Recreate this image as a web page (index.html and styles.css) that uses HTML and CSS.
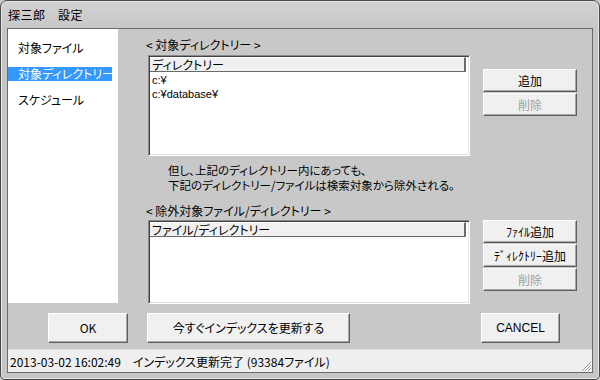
FILE: index.html
```html
<!DOCTYPE html>
<html lang="ja">
<head>
  <meta charset="UTF-8">
  <title>探三郎 設定</title>
  <link rel="stylesheet" href="styles.css">
</head>
<body>
  <div class="window">
    <div class="titlebar">探三郎　設定</div>
    <div class="client">
      <div class="content">
        <ul class="nav">
          <li>対象ファイル</li>
          <li class="active">対象ディレクトリー</li>
          <li>スケジュール</li>
        </ul>

        <div class="panel">
          <div class="caption">&lt; 対象ディレクトリー &gt;</div>
          <div></div>
          <div class="listbox list-dirs">
            <div class="list-head"><span>ディレクトリー</span></div>
            <div class="list-item">c:¥</div>
            <div class="list-item">c:¥database¥</div>
          </div>
          <div class="side-buttons first">
            <button>追加</button>
            <button disabled>削除</button>
          </div>

          <div class="note">
            <div>但し、上記のディレクトリー内にあっても、</div>
            <div>下記のディレクトリー/ファイルは検索対象から除外される。</div>
          </div>

          <div class="caption second">&lt; 除外対象ファイル/ディレクトリー &gt;</div>
          <div></div>
          <div class="listbox list-excl">
            <div class="list-head"><span>ファイル/ディレクトリー</span></div>
          </div>
          <div class="side-buttons">
            <button>ﾌｧｲﾙ追加</button>
            <button>ﾃﾞｨﾚｸﾄﾘｰ追加</button>
            <button disabled>削除</button>
          </div>
        </div>
      </div>

      <div class="actions">
        <button class="btn-ok">OK</button>
        <button class="btn-update">今すぐインデックスを更新する</button>
        <button class="btn-cancel">CANCEL</button>
      </div>

      <div class="statusbar">
        <span>2013-03-02 16:02:49　インデックス更新完了 (93384ファイル)</span>
        <svg class="grip" width="12" height="12" viewBox="0 0 12 12">
          <path d="M11 2 L2 11 M11 5 L5 11 M11 8 L8 11" stroke="#9a9a9a" stroke-width="1"/>
          <path d="M12 3 L3 12 M12 6 L6 12 M12 9 L9 12" stroke="#ffffff" stroke-width="1"/>
        </svg>
      </div>
    </div>
  </div>
</body>
</html>
```

FILE: styles.css
```css
body {
  margin: 0;
  background: #c8c8c8;
  font-family: "Noto Sans CJK JP", "Liberation Sans", sans-serif;
  font-size: 12px;
  font-feature-settings: "palt";
  color: #000;
}
.window {
  width: 600px;
  height: 380px;
  box-sizing: border-box;
  border: 1px solid #4a4a4a;
  border-radius: 7px 7px 5px 5px;
  background: linear-gradient(#d2d2d2, #c6c6c6 30px, #c6c6c6);
  box-shadow: inset 0 0 0 1px #e6e6e6;
  padding: 0 6px 6px 6px;
  display: flex;
  flex-direction: column;
}
.titlebar {
  height: 27px;
  line-height: 27px;
  padding-left: 1px;
  font-size: 12px;
  letter-spacing: 0.5px;
}
.client {
  flex: 1;
  background: #c8c8c8;
  border: 1px solid #6a6a6a;
  display: flex;
  flex-direction: column;
}
.content {
  display: flex;
  align-items: flex-start;
}
.nav {
  list-style: none;
  margin: 0;
  padding: 12px 0 0 0;
  width: 110px;
  height: 274px;
  box-sizing: border-box;
  background: #fff;
}
.nav li {
  line-height: 14px;
  height: 14px;
  margin: 0 6px 12px 0;
  padding-left: 10px;
  white-space: nowrap;
}
.nav li.active {
  background: #3399ff;
  color: #fff;
}
.panel {
  display: grid;
  grid-template-columns: 324px 94px;
  column-gap: 13px;
  padding: 9px 0 0 28px;
}
.caption {
  height: 17px;
  line-height: 14px;
  white-space: nowrap;
}
.caption.second {
  margin-top: 11px;
  height: 16px;
}
.listbox {
  margin-left: 2px;
  box-sizing: border-box;
  background: #fff;
  border: 1px solid;
  border-color: #8a8a8a #ffffff #ffffff #8a8a8a;
  box-shadow: inset 1px 1px 0 #404040, inset -1px -1px 0 #e2e2e2;
  padding: 1px;
}
.list-dirs {
  height: 101px;
}
.list-excl {
  height: 84px;
}
.list-head {
  height: 15px;
  padding-right: 2px;
}
.list-head span {
  display: block;
  height: 15px;
  box-sizing: border-box;
  line-height: 13px;
  padding-left: 2px;
  background: #f0f0f0;
  border-top: 1px solid #fff;
  border-bottom: 1px solid #6a6a6a;
  border-right: 2px solid #6a6a6a;
  white-space: nowrap;
}
.list-item {
  line-height: 14px;
  padding-left: 2px;
  font-family: "Liberation Sans", "Noto Sans CJK JP", sans-serif;
  font-size: 11px;
}
.list-dirs .list-head {
  margin-bottom: 1px;
}
.side-buttons {
  display: flex;
  flex-direction: column;
  gap: 1px;
}
.side-buttons.first {
  margin-top: 14px;
}
button {
  font-family: "Noto Sans CJK JP", "Liberation Sans", sans-serif;
  font-size: 12px;
  font-feature-settings: "palt";
  color: #000;
  background: #f0f0f0;
  border: 1px solid;
  border-color: #ffffff #5e5e5e #5e5e5e #ffffff;
  box-shadow: inset -1px -1px 0 #a8a8a8;
  padding: 0;
  line-height: 14px;
  white-space: nowrap;
}
.side-buttons button {
  height: 23px;
}
button:disabled {
  color: #a0a0a0;
}
.note {
  grid-column: 1 / -1;
  margin-top: 7px;
  padding-left: 22px;
  line-height: 15px;
  font-size: 11.5px;
  white-space: nowrap;
}
.note div {
  height: 15px;
}
.actions {
  display: flex;
  margin-top: 9px;
  height: 30px;
}
.actions button {
  height: 30px;
}
.btn-ok {
  margin-left: 40px;
  width: 80px;
}
.btn-update {
  margin-left: 19px;
  width: 203px;
}
.btn-cancel {
  margin-left: auto;
  margin-right: 32px;
  width: 79px;
  font-family: "Liberation Sans", sans-serif;
}
.statusbar {
  margin-top: auto;
  height: 23px;
  box-sizing: border-box;
  background: #efefef;
  border-top: 1px solid #dcdcdc;
  display: flex;
  align-items: center;
  justify-content: space-between;
  padding-left: 2px;
  font-size: 12px;
  white-space: nowrap;
}
.grip {
  align-self: flex-end;
}
```
